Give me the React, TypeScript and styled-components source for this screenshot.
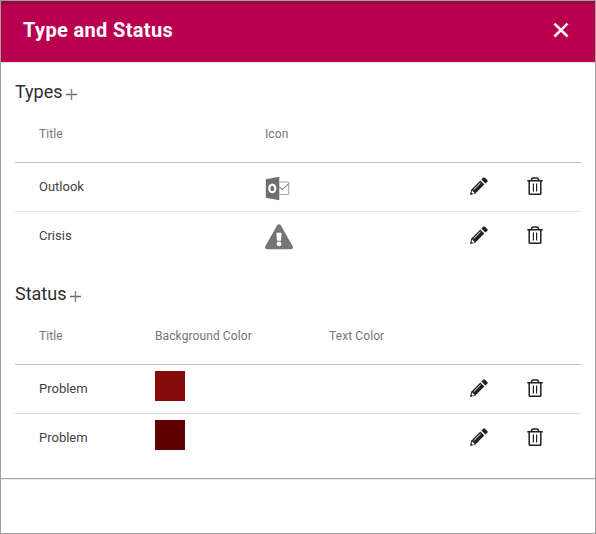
import React from "react";
import styled, { createGlobalStyle } from "styled-components";

const GlobalStyle = createGlobalStyle`
  * { box-sizing: border-box; }
  body { margin: 0; background: #fff; font-family: Roboto, "Liberation Sans", sans-serif; }
`;

const Dialog = styled.main`
  display: flex;
  flex-direction: column;
  width: 596px;
  height: 534px;
  border: 1px solid #a0a0a0;
  background: #fff;
  overflow: hidden;
`;

const Header = styled.header`
  display: flex;
  align-items: center;
  justify-content: space-between;
  height: 62px;
  flex: none;
  padding: 0 26px 3px 22px;
  color: #fff;
  background: linear-gradient(#85083f 0, #a40248 2px, #b4004e 5px, #b9004f 8px);
  border-bottom: 1px solid #e6dfe3;
`;

const DialogTitle = styled.h1`
  margin: 0;
  font-size: 20px;
  line-height: 28px;
  font-weight: 700;
  letter-spacing: 0.35px;
`;

const IconButton = styled.button`
  display: flex;
  padding: 0;
  border: 0;
  background: none;
  color: inherit;
`;

const Body = styled.div`
  display: flex;
  flex-direction: column;
  gap: 20px;
  height: 415px;
  flex: none;
  padding: 15px 14px 0;
`;

const Footer = styled.footer`
  flex: 1;
  border-top: 1px solid #a6a6a6;
  box-shadow: inset 0 1px #ececec;
`;

const SectionHeading = styled.div`
  display: flex;
  align-items: center;
  gap: 3.5px;
  height: 28px;
  color: #2f2f2f;
`;

const SectionTitle = styled.h2`
  margin: 0;
  font-size: 18px;
  line-height: 28px;
  font-weight: 400;
`;

const AddButton = styled(IconButton)`
  color: #6c6c6c;
  padding-top: 4px;
`;

const Row = styled.div<{ $columns: string }>`
  display: grid;
  grid-template-columns: ${(p) => p.$columns};
  align-items: center;
  height: 49px;
  padding: 0 0 2px 24px;
  border-bottom: 1px solid #dedede;
  color: #424242;
  font-size: 13px;
  &:last-child { height: 48px; border-bottom: 0; }
`;

const HeadRow = styled(Row)`
  height: 57px;
  padding-bottom: 1px;
  border-bottom-color: #c0c0c0;
  color: #757575;
  font-size: 12px;
  letter-spacing: 0.1px;
`;

const Swatch = styled.div<{ $color: string }>`
  width: 30px;
  height: 30px;
  margin-bottom: 4px;
  background: ${(p) => p.$color};
`;

const TypeIcon = styled.div`
  display: flex;
  padding-top: 4px;
`;

const Actions = styled.div`
  display: flex;
  gap: 38px;
  color: #202020;
`;

const Plus = () => (
  <svg width="11" height="11" viewBox="0 0 11 11" stroke="currentColor" strokeWidth="1.5">
    <path d="M0 5.5H11" />
    <path d="M5.5 0V11" stroke="#888" />
  </svg>
);

const Cross = () => (
  <svg width="16" height="16" viewBox="0 0 16 16" fill="none" stroke="currentColor" strokeWidth="2.5">
    <path d="M1.4 1.7 14.6 14.5M14.6 1.7 1.4 14.5" />
  </svg>
);

const Pencil = () => (
  <svg width="18" height="18" viewBox="0 0 18 18">
    <path fill="currentColor" d="M0 18 1.2 12.8 10.4 3.6 14.3 7.5 5.1 16.7ZM11.4 2.6 13.2.7Q14.1-.2 15 .7L17.3 3Q18.1 3.9 17.3 4.8L15.4 6.6Z" />
    <path fill="none" stroke="#fff" strokeWidth="1" d="M3.7 12.7 10.6 5.8" />
    <path fill="#fff" d="m1.9 14 .5-.5.5 1.1 1.1.4.5 1.1-.5.3-1.4.3-1-1Z" />
  </svg>
);

const Trash = () => (
  <svg width="18" height="18" viewBox="0 0 18 18" fill="none" stroke="currentColor">
    <path strokeWidth="1.6" d="M1.3 3.7H16.7M5.5 3.2V2.6Q5.8 1 7.2 1H10.8Q12.2 1 12.5 2.6V3.2" />
    <path strokeWidth="1.5" d="M3.2 4V16.4Q3.2 17.2 4 17.2H14Q14.8 17.2 14.8 16.4V4" />
    <path strokeWidth="1.2" d="M7.4 6.4V14.4M10.6 6.4V14.4" />
  </svg>
);

const OutlookIcon = () => (
  <svg width="25" height="26" viewBox="0 -1.6 25 26">
    <path fill="#6e6e6e" d="M.8 2.6 14.3.2V23.6L.8 21.1Z" />
    <ellipse cx="7.3" cy="11.8" rx="3" ry="3.8" fill="none" stroke="#fff" strokeWidth="2.2" />
    <path fill="none" stroke="#a4a4a4" d="M14.5 5.4H23.7V17.9H14.5" />
    <path fill="none" stroke="#808080" strokeWidth="1.1" d="M14.3 10.3 17.3 13 23.7 7.1" />
  </svg>
);

const WarningIcon = () => (
  <svg width="28" height="26" viewBox="0 0 28 26">
    <path fill="#757575" d="M12.2 1.2Q14-.8 15.8 1.2L27.7 22.2Q28.7 25.2 25.7 25.2H2.3Q-.7 25.2.3 22.2Z" />
    <path fill="#fff" d="M11.4 8.7H16.6L16 16.7H12Z" />
    <circle cx="14" cy="19.9" r="2.4" fill="#fff" />
  </svg>
);

const RowActions = () => (
  <Actions>
    <IconButton aria-label="Edit"><Pencil /></IconButton>
    <IconButton aria-label="Delete"><Trash /></IconButton>
  </Actions>
);

const SectionHead = ({ title }: { title: string }) => (
  <SectionHeading>
    <SectionTitle>{title}</SectionTitle>
    <AddButton aria-label={`Add ${title}`}><Plus /></AddButton>
  </SectionHeading>
);

const typeColumns = "226px 205px 1fr";
const statusColumns = "116px 174px 141px 1fr";

const types = [
  { title: "Outlook", icon: <OutlookIcon /> },
  { title: "Crisis", icon: <WarningIcon /> },
];

const statuses = [
  { title: "Problem", color: "#850c0a" },
  { title: "Problem", color: "#600000" },
];

export default function App() {
  return (
    <>
      <GlobalStyle />
      <Dialog>
        <Header>
          <DialogTitle>Type and Status</DialogTitle>
          <IconButton aria-label="Close"><Cross /></IconButton>
        </Header>
        <Body>
          <section>
            <SectionHead title="Types" />
            <HeadRow $columns={typeColumns}>
              <span>Title</span>
              <span>Icon</span>
            </HeadRow>
            {types.map((type) => (
              <Row key={type.title} $columns={typeColumns}>
                <span>{type.title}</span>
                <TypeIcon>{type.icon}</TypeIcon>
                <RowActions />
              </Row>
            ))}
          </section>
          <section>
            <SectionHead title="Status" />
            <HeadRow $columns={statusColumns}>
              <span>Title</span>
              <span>Background Color</span>
              <span>Text Color</span>
            </HeadRow>
            {statuses.map((status) => (
              <Row key={status.color} $columns={statusColumns}>
                <span>{status.title}</span>
                <Swatch $color={status.color} />
                <span />
                <RowActions />
              </Row>
            ))}
          </section>
        </Body>
        <Footer />
      </Dialog>
    </>
  );
}
